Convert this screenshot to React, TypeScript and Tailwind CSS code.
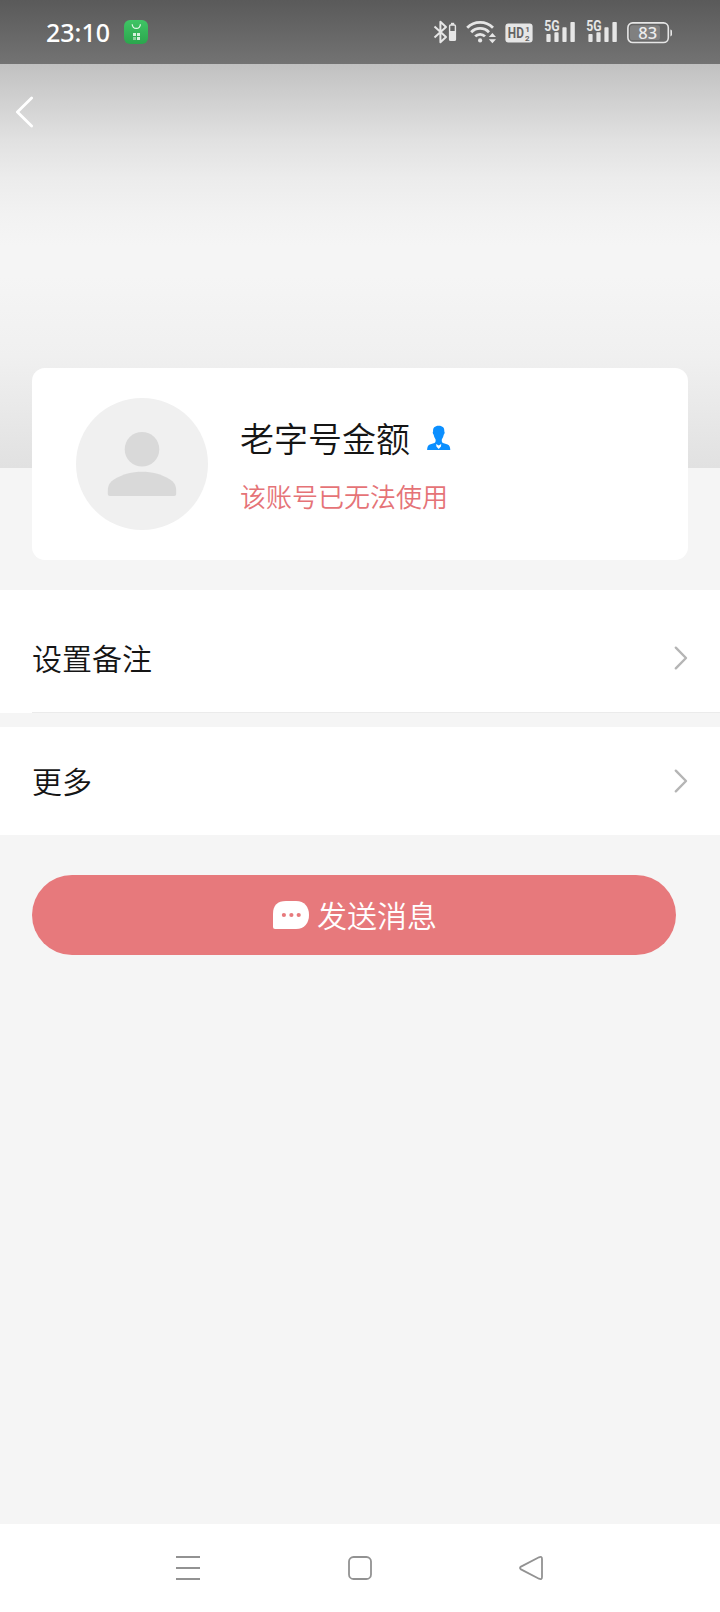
import { useState } from 'react';

const BluetoothIcon = () => (
    <svg width="26" height="24" viewBox="0 0 26 24" fill="none" stroke="#e6e6e6">
        <path d="M1.5 6.5 L13 17 L7.4 22.2 V1.8 L13 7 L1.5 17.5" strokeWidth="2" strokeLinejoin="round" />
        <rect x="16.6" y="5" width="5.8" height="15.4" rx="1" strokeWidth="1.4" />
        <rect x="17" y="11" width="5.2" height="9" fill="#e6e6e6" stroke="none" />
        <rect x="18" y="2.8" width="3.2" height="2" fill="#e6e6e6" stroke="none" />
    </svg>
);

const WifiIcon = () => (
    <svg width="32" height="24" viewBox="0 0 32 24" fill="none" stroke="#e6e6e6" strokeWidth="2.8">
        <path d="M1.2 7.8 A18 18 0 0 1 27 7.8" />
        <path d="M5.2 12.2 A12.4 12.4 0 0 1 23 12.2" />
        <path d="M9.2 16.4 A6.8 6.8 0 0 1 19 16.4" />
        <circle cx="14.1" cy="20.4" r="2.1" fill="#e6e6e6" stroke="none" />
        <path d="M26.4 13 L30 17 H22.8 Z M26.4 23.3 L22.8 19.2 H30 Z" fill="#e6e6e6" stroke="none" />
    </svg>
);

const HdIcon = () => (
    <svg width="28" height="20" viewBox="0 0 28 20" className="font-['Roboto',sans-serif]">
        <rect x="0.4" y="0.4" width="27.2" height="19.2" rx="3" fill="#e6e6e6" />
        <text x="2.8" y="15.2" fontSize="15" fontWeight="700" fill="#636363" textLength="16" lengthAdjust="spacingAndGlyphs">HD</text>
        <text x="20.2" y="9" fontSize="8" fontWeight="700" fill="#636363">1</text>
        <text x="20" y="17.6" fontSize="8" fontWeight="700" fill="#636363">2</text>
    </svg>
);

const SignalIcon = () => (
    <svg width="32" height="28" viewBox="0 -4 32 28" fill="#e6e6e6" className="font-['Roboto',sans-serif]">
        <text x="0.2" y="11" fontSize="14" fontWeight="700" textLength="15.4" lengthAdjust="spacingAndGlyphs">5G</text>
        <rect x="2.4" y="14" width="4.2" height="8" rx="0.8" />
        <rect x="10.4" y="12.2" width="4.2" height="9.8" rx="0.8" />
        <rect x="18.4" y="7.2" width="4.2" height="14.8" rx="0.8" />
        <rect x="26.4" y="2" width="4.4" height="20" rx="0.8" />
    </svg>
);

const BatteryIcon = ({ level }: { level: number }) => (
    <svg width="46" height="22" viewBox="0 0 46 22" className="font-['Noto_Sans',sans-serif]">
        <rect x="0.9" y="0.9" width="40.4" height="19.6" rx="4.8" fill="none" stroke="#e6e6e6" strokeWidth="1.6" />
        <rect x="3" y="3.2" width="30" height="14.8" rx="2.6" fill="#808080" />
        <path d="M43.4 7.4 V14.4 Q45 14.2 45 12.6 V9.2 Q45 7.6 43.4 7.4 Z" fill="#e6e6e6" />
        <text x="20.8" y="16.5" fontSize="16.5" fontWeight="500" fill="#ededed" textAnchor="middle">{level}</text>
    </svg>
);

const StatusBar = () => (
    <div className="flex h-16 items-center bg-linear-to-b from-[#5a5a5a] to-[#737373] pl-[46px] pr-[47px]">
        <span className="w-[78px] font-['Noto_Sans',sans-serif] text-[25px] font-medium leading-8 text-white">23:10</span>
        <svg width="24" height="24" viewBox="0 0 24 24">
            <defs>
                <linearGradient id="store" x1="0" y1="0" x2="0" y2="1">
                    <stop offset="0" stopColor="#3fc565" />
                    <stop offset="1" stopColor="#2ba64d" />
                </linearGradient>
            </defs>
            <rect width="24" height="24" rx="6" fill="url(#store)" />
            <path d="M8.2 4.2 C8.6 9.8 16 9.8 16.4 4.2" fill="none" stroke="#e4f8e9" strokeWidth="1.2" />
            <path d="M9 13 h3 v3 h-3 z M13 13 h3 v3 h-3 z M13 17 h3 v3 h-3 z" fill="#d5f1dc" />
            <path d="M9 17 h3 v3 h-3 z" fill="#90d3a1" />
        </svg>
        <div className="ml-auto flex items-center">
            <BluetoothIcon />
            <div className="ml-[7px]"><WifiIcon /></div>
            <div className="ml-[7px] mt-px"><HdIcon /></div>
            <div className="-mt-1 ml-[11px]"><SignalIcon /></div>
            <div className="-mt-1 ml-2.5"><SignalIcon /></div>
            <div className="ml-[9px] mt-px"><BatteryIcon level={83} /></div>
        </div>
    </div>
);

const Avatar = () => (
    <svg width="132" height="132" viewBox="0 0 132 132" className="shrink-0">
        <circle cx="66" cy="66" r="66" fill="#f0f0f0" />
        <circle cx="66" cy="51.3" r="17.3" fill="#d9d9d9" />
        <path d="M31.8 93 C31.8 87 34 84 38 81.5 C47 76 56 73.8 66 73.8 C76 73.8 85 76 94 81.5 C98 84 100.2 87 100.2 93 V96 Q100.2 98 98.2 98 H33.8 Q31.8 98 31.8 96 Z" fill="#d9d9d9" />
    </svg>
);

const UserIcon = () => (
    <svg width="24" height="26" viewBox="0 0 24 26">
        <path d="M11.7 0.8 C15.8 0.8 17.6 3 17.3 6.4 C18 6.8 17.6 9 16.7 9.8 C16.4 11.8 15.4 13.4 14.8 14.4 C14.7 16.2 14.8 17.4 16 18 L20.6 19.6 C22.6 20.4 23.1 22.2 23.3 25 H0.1 C0.3 22.2 0.8 20.4 2.8 19.6 L7.4 18 C8.6 17.4 8.7 16.2 8.6 14.4 C8 13.4 7 11.8 6.7 9.8 C5.8 9 5.4 6.8 6.1 6.4 C5.8 3 7.6 0.8 11.7 0.8 Z" fill="#0b8fff" />
        <path d="M9.2 19 L11.7 20.4 L14.2 19 L14 21.4 L11.7 24 L9.4 21.4 Z" fill="#fff" />
    </svg>
);

const ChevronRight = () => (
    <svg width="14" height="24" viewBox="0 0 14 24" fill="none" stroke="#b5b5b5" strokeWidth="2.4" strokeLinecap="round" strokeLinejoin="round">
        <path d="M1.8 1.7 L12 12 L1.8 22.3" />
    </svg>
);

const NavBar = () => (
    <div className="flex h-[88px] items-center justify-between bg-white px-[174px]">
        <svg width="28" height="26" viewBox="0 0 28 26" stroke="#929292" strokeWidth="2">
            <path d="M2 2 H26 M2 13 H26 M2 24 H26" />
        </svg>
        <svg width="26" height="26" viewBox="0 0 26 26" fill="none" stroke="#929292" strokeWidth="1.8">
            <rect x="2" y="2" width="22" height="22" rx="4.6" />
        </svg>
        <svg width="28" height="26" viewBox="0 0 28 26" fill="none" stroke="#929292" strokeWidth="1.8" strokeLinejoin="round">
            <path d="M21 2.3 Q24 1 24 4 V22 Q24 25 21 23.7 L3 14.4 Q1 13 3 11.6 Z" />
        </svg>
    </div>
);

const App = () => {
    const [user] = useState({ name: '老字号金额', notice: '该账号已无法使用' });

    return (
        <div className="flex h-[1612px] w-[720px] flex-col overflow-hidden bg-[#f5f5f5] font-['Noto_Sans_CJK_SC',sans-serif] font-[350] text-[#151515]">
            <StatusBar />

            <div className="h-[404px] shrink-0 bg-[linear-gradient(to_bottom,#c1c1c1_0px,#e1e1e1_76px,#ececec_114px,#f2f2f2_150px,#f5f5f5_182px,#f5f5f5_212px,#f0f0f0_292px,#e1e1e1_404px)] pl-4 pt-8">
                <button className="block">
                    <svg width="18" height="32" viewBox="0 0 18 32" fill="none" stroke="#fff" strokeWidth="2.8" strokeLinecap="round" strokeLinejoin="round">
                        <path d="M15.6 2 L1.4 16 L15.6 30" />
                    </svg>
                </button>
            </div>

            <div className="mx-8 -mt-[100px] flex h-48 shrink-0 items-center rounded-[13px] bg-white pl-11">
                <Avatar />
                <div className="ml-8 pt-[3px]">
                    <div className="flex items-center">
                        <span className="-mt-1 text-[34px] leading-[50px]">{user.name}</span>
                        <div className="-mt-1 ml-[17px]"><UserIcon /></div>
                    </div>
                    <p className="mt-3.5 text-[26px] leading-[38px] text-[#e57377]">{user.notice}</p>
                </div>
            </div>

            <div className="mt-[30px] bg-white">
                <button className="flex h-[122px] w-full items-center justify-between px-8 pt-3.5">
                    <span className="-mt-[3px] text-[30px] leading-[44px]">设置备注</span>
                    <ChevronRight />
                </button>
                <div className="ml-8 h-px bg-[#ebebeb]" />
            </div>
            <button className="mt-3.5 flex h-[108px] items-center justify-between bg-white px-8">
                <span className="-mt-[3px] text-[30px] leading-[44px]">更多</span>
                <ChevronRight />
            </button>

            <button className="ml-8 mt-10 flex h-20 w-[644px] items-center justify-center rounded-full bg-[#e7797c] pl-0.5 text-white">
                <svg width="36" height="28" viewBox="0 0 36 28">
                    <path d="M0 13 C0 4 4.5 0 13 0 H23 C31.5 0 36 6 36 14 C36 22 31.5 28 23 28 H2 Q0 28 0 26 Z" fill="#fff" />
                    <g fill="#e7797c">
                        <circle cx="10.9" cy="14" r="2.1" />
                        <circle cx="18.4" cy="14" r="2.1" />
                        <circle cx="25.7" cy="14" r="2.1" />
                    </g>
                </svg>
                <span className="-mt-[3px] ml-2 text-[30px] leading-[44px]">发送消息</span>
            </button>

            <div className="mt-auto">
                <NavBar />
            </div>
        </div>
    );
};

export default App;
